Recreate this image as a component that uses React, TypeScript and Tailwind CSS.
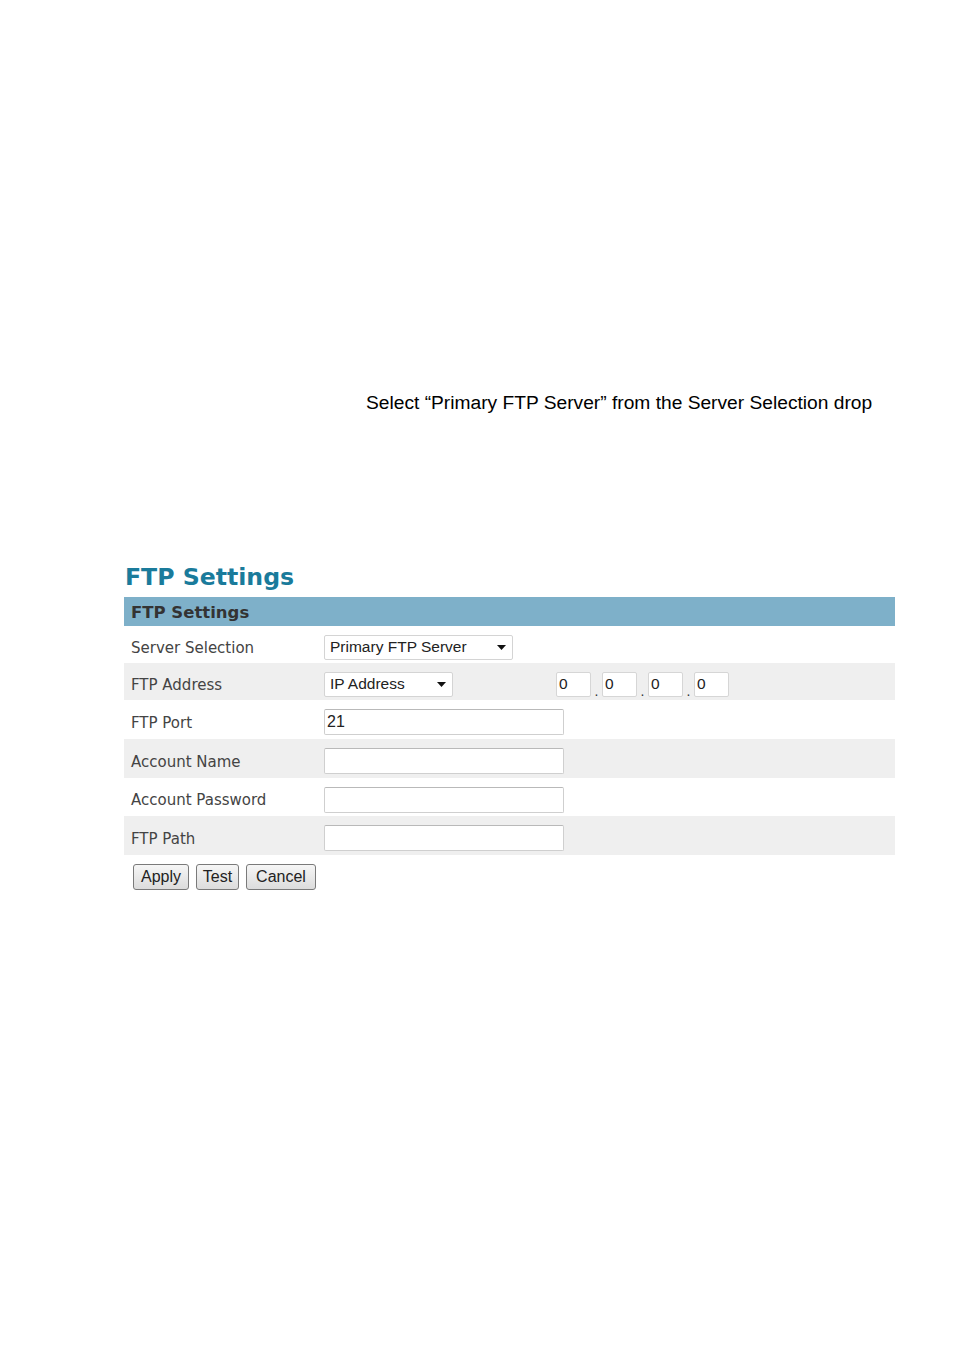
import React from 'react';

const verdana = { fontFamily: '"DejaVu Sans", Verdana, sans-serif' };

const Caret = () => (
    <svg width="9" height="5" viewBox="0 0 9 5" className="shrink-0">
        <path d="M0 0 H9 L4.5 5 Z" fill="#111" />
    </svg>
);

const Select = ({ value, width }: { value: string; width: string }) => (
    <div className={`${width} h-[25px] flex items-center justify-between pl-[5px] pr-[6px] bg-white border border-[#d4d4d4] rounded-[2px] text-[15.5px] text-[#222] font-['Liberation_Sans',Arial,sans-serif]`}>
        <span>{value}</span>
        <Caret />
    </div>
);

const TextBox = ({ value = '' }: { value?: string }) => (
    <div className="w-[240px] h-[26px] flex items-center pl-[2px] bg-white border border-[#cfcfcf] border-t-[#b9b9b9] rounded-[2px] text-[16px] text-[#222] font-['Liberation_Sans',Arial,sans-serif]">
        {value}
    </div>
);

const IpBox = () => (
    <div className="w-[35px] h-[25px] flex items-center pl-[2px] bg-white border border-[#d6d6d6] rounded-[2px] text-[15.5px] text-[#222] font-['Liberation_Sans',Arial,sans-serif]">
        0
    </div>
);

const Row = ({ label, gray, height, children }: { label: string; gray?: boolean; height: string; children: React.ReactNode }) => (
    <div className={`flex items-center pt-[5px] ${height} ${gray ? 'bg-[#efefef]' : 'bg-white'}`}>
        <div className="w-[200px] pl-[7px] pt-[2px] text-[15px] text-[#444]" style={verdana}>{label}</div>
        <div className="flex items-center">{children}</div>
    </div>
);

const Button = ({ label, width }: { label: string; width: string }) => (
    <button className={`${width} h-[26px] flex items-center justify-center bg-gradient-to-b from-[#f6f6f6] to-[#dcdcdc] border border-[#7a7a7a] rounded-[3px] text-[16px] text-[#222] font-['Liberation_Sans',Arial,sans-serif]`}>
        {label}
    </button>
);

export default function App() {
    return (
        <div className="w-[954px] h-[1350px] bg-white">
            <div className="pt-[390px] pl-[366px] text-[19.2px] leading-[26px] text-black font-['Liberation_Sans',Arial,sans-serif]">
                Select “Primary FTP Server” from the Server Selection drop
            </div>

            <div className="mt-[144px] ml-[124px] w-[771px]">
                <h1 className="pl-[1px] text-[23.6px] leading-[34px] font-bold text-[#1a7b9b]" style={verdana}>FTP Settings</h1>
                <div className="mt-[3px] h-[29px] flex items-center pl-[7px] pt-[3px] bg-[#7eb0c9] text-[16.5px] font-bold text-[#333]" style={verdana}>
                    FTP Settings
                </div>

                <Row label="Server Selection" height="h-[37px]">
                    <Select value="Primary FTP Server" width="w-[189px]" />
                </Row>
                <Row label="FTP Address" gray height="h-[37px]">
                    <Select value="IP Address" width="w-[129px]" />
                    <div className="ml-[103px] flex items-end">
                        <IpBox />
                        {[0, 1, 2].map(i => (
                            <React.Fragment key={i}>
                                <span className="w-[11px] text-center text-[14px] leading-[12px] text-[#333] font-['Liberation_Sans',Arial,sans-serif]">.</span>
                                <IpBox />
                            </React.Fragment>
                        ))}
                    </div>
                </Row>
                <Row label="FTP Port" height="h-[39px]">
                    <TextBox value="21" />
                </Row>
                <Row label="Account Name" gray height="h-[39px]">
                    <TextBox />
                </Row>
                <Row label="Account Password" height="h-[38px]">
                    <TextBox />
                </Row>
                <Row label="FTP Path" gray height="h-[39px]">
                    <TextBox />
                </Row>

                <div className="flex gap-[7px] pl-[9px] pt-[9px]">
                    <Button label="Apply" width="w-[56px]" />
                    <Button label="Test" width="w-[43px]" />
                    <Button label="Cancel" width="w-[70px]" />
                </div>
            </div>
        </div>
    );
}
